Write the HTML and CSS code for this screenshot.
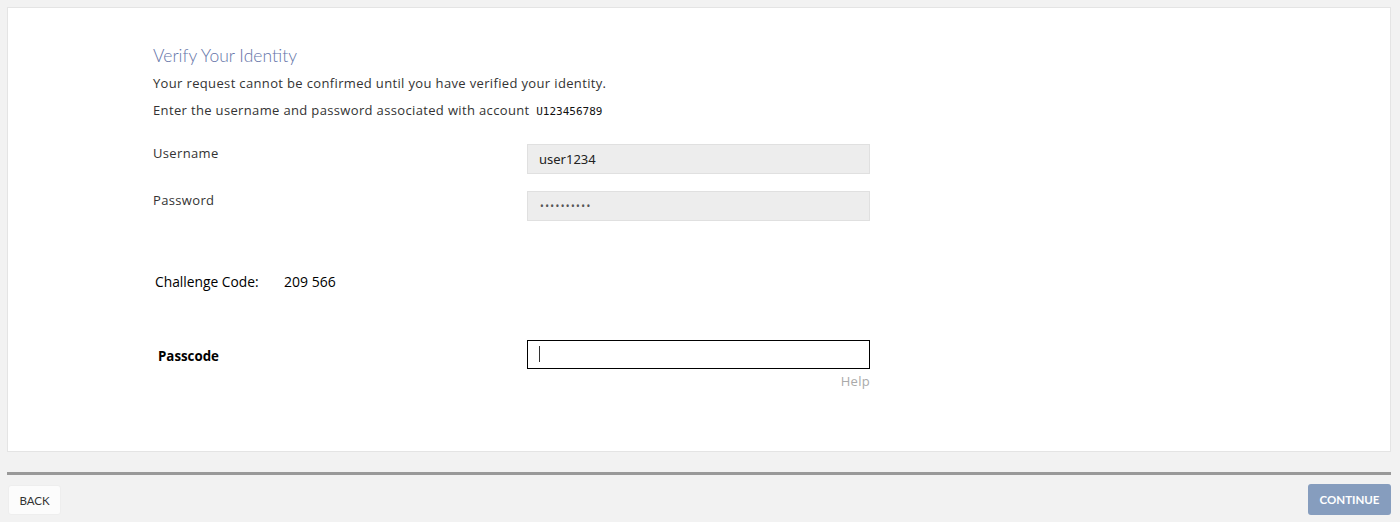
FILE: index.html
```html
<!DOCTYPE html>
<html lang="en">
<head>
    <meta charset="UTF-8">
    <title>Verify Your Identity</title>
    <link rel="stylesheet" href="styles.css">
</head>
<body>
    <div class="card">
        <h1 class="title">Verify Your Identity</h1>
        <p class="intro">Your request cannot be confirmed until you have verified your identity.</p>
        <p class="intro">Enter the username and password associated with account <span class="account">U123456789</span></p>

        <div class="field-row">
            <label class="field-label">Username</label>
            <div class="field-input readonly">user1234</div>
        </div>
        <div class="field-row">
            <label class="field-label">Password</label>
            <div class="field-input readonly dots">&bull;&bull;&bull;&bull;&bull;&bull;&bull;&bull;&bull;&bull;</div>
        </div>

        <div class="challenge">
            <span class="challenge-label">Challenge Code:</span>
            <span class="challenge-code">209 566</span>
        </div>

        <div class="passcode-row">
            <label class="passcode-label">Passcode</label>
            <div class="passcode-box">
                <div class="passcode-input"><span class="caret"></span></div>
                <a class="help" href="#">Help</a>
            </div>
        </div>
    </div>

    <div class="footer">
        <button class="btn btn-back">BACK</button>
        <button class="btn btn-continue">CONTINUE</button>
    </div>
</body>
</html>
```

FILE: styles.css
```css
* {
    margin: 0;
    padding: 0;
    box-sizing: border-box;
}

body {
    background: #f2f2f2;
    font-family: "Open Sans", Lato, sans-serif;
    color: #333;
    padding: 7px 9px 0 7px;
}

.card {
    background: #fff;
    border: 1px solid #e4e4e4;
    height: 445px;
    padding: 38px 0 0 145px;
}

.title {
    font-family: Lato, sans-serif;
    font-weight: 300;
    font-size: 17.5px;
    color: #6474a8;
    line-height: 20px;
    margin-bottom: 8px;
}

.intro {
    font-size: 13px;
    letter-spacing: 0.35px;
    line-height: 18px;
    margin-bottom: 9px;
    color: #333;
}

.account {
    font-family: "DejaVu Sans Mono", "Liberation Mono", monospace;
    font-size: 11px;
    letter-spacing: 0;
    margin-left: 3px;
    color: #111;
}

.field-row {
    display: flex;
    align-items: flex-start;
    margin-top: 23px;
    margin-bottom: 17px;
}

.field-row + .field-row {
    margin-top: 0;
}

.field-label {
    width: 374px;
    font-size: 13px;
    letter-spacing: 0.35px;
    line-height: 18px;
}

.field-input {
    width: 343px;
    height: 30px;
    background: #ededed;
    border: 1px solid #e0e0e0;
    font-family: "Noto Sans", sans-serif;
    font-size: 13px;
    line-height: 28px;
    padding-left: 11px;
    color: #222;
}

.field-input.dots {
    font-size: 10px;
    letter-spacing: 1.4px;
    padding-left: 12px;
    color: #555;
}

.challenge {
    display: flex;
    margin: 51px 0 0 2px;
    font-family: "Open Sans", sans-serif;
    font-size: 13.8px;
    color: #000;
}

.challenge-label {
    width: 129px;
}

.challenge-code {
    font-size: 14px;
}

.passcode-row {
    display: flex;
    margin-top: 49px;
}

.passcode-label {
    width: 374px;
    padding: 7px 0 0 5px;
    font-family: "Open Sans", sans-serif;
    font-weight: 700;
    font-size: 13.3px;
    color: #000;
}

.passcode-box {
    display: flex;
    flex-direction: column;
    align-items: flex-end;
    width: 343px;
}

.passcode-input {
    width: 343px;
    height: 29px;
    border: 1px solid #000;
    padding: 5px 0 0 11px;
}

.caret {
    display: block;
    width: 1px;
    height: 16px;
    background: #333;
}

.help {
    font-size: 13px;
    letter-spacing: 0.3px;
    color: #aaa;
    text-decoration: none;
    margin-top: 3px;
}

.footer {
    border-top: 3px solid #999;
    margin-top: 20px;
    padding-top: 10px;
    display: flex;
    justify-content: space-between;
}

.btn {
    font-family: Lato, "Open Sans", sans-serif;
    font-size: 11.5px;
    border: none;
    cursor: pointer;
}

.btn-back {
    background: #fcfcfc;
    border: 1px solid #eee;
    border-radius: 3px;
    color: #333;
    width: 53px;
    height: 30px;
    margin-left: 1px;
}

.btn-continue {
    background: #869dbe;
    color: #fff;
    font-weight: 700;
    border-radius: 3px;
    width: 83px;
    height: 31px;
    margin-top: -1px;
}
```
